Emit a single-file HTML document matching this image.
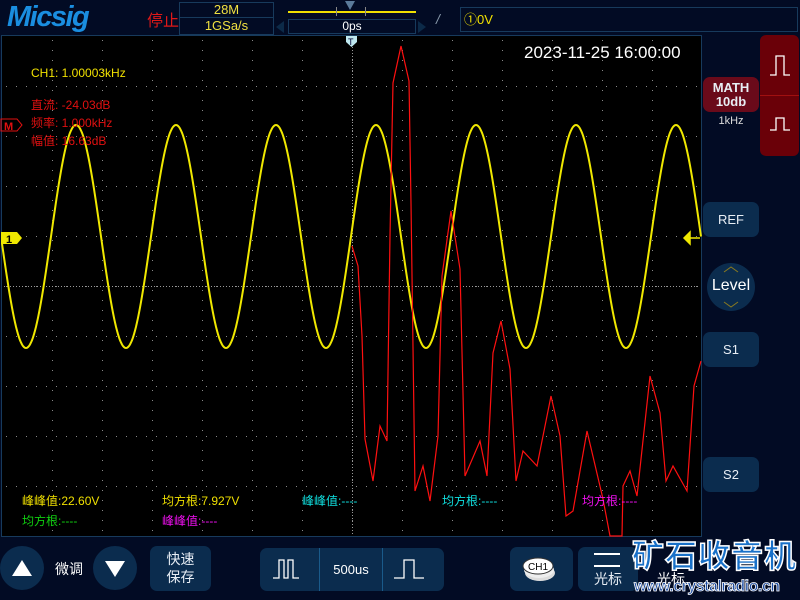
<!DOCTYPE html>
<html><head><meta charset="utf-8">
<style>
*{margin:0;padding:0;box-sizing:border-box}
body{width:800px;height:600px;background:#020b24;position:relative;overflow:hidden;font-family:"Liberation Sans","Noto Sans CJK SC",sans-serif;color:#fff}
.a{position:absolute;white-space:nowrap}
.btn{position:absolute;background:#0b2c4e;border-radius:7px;color:#e8eef5;text-align:center}
.circ{position:absolute;background:#0b2c4e;border-radius:50%;width:44px;height:44px}
</style></head><body>
<div class="a" style="left:7px;top:1px;font:italic bold 29px 'Liberation Sans',sans-serif;color:#1a8ee0;letter-spacing:-1.5px">Micsig</div>
<div class="a" style="left:147px;top:7px;font-size:16px;color:#e01818">停止</div>
<div class="a" style="left:179px;top:2px;width:95px;height:33px;border:1px solid #173a5c"></div>
<div class="a" style="left:179px;top:17px;width:95px;height:1px;background:#173a5c"></div>
<div class="a" style="left:179px;top:2px;width:95px;text-align:center;font-size:13px;color:#f0e040">28M</div>
<div class="a" style="left:179px;top:18px;width:95px;text-align:center;font-size:13px;color:#f0e040">1GSa/s</div>
<div class="a" style="left:288px;top:11px;width:128px;height:2px;background:#f0e000"></div>
<div class="a" style="left:336px;top:7px;width:30px;height:9px;border:1px solid #888;border-top:none;border-bottom:none"></div>
<div class="a" style="left:345px;top:1px;width:0;height:0;border-left:5px solid transparent;border-right:5px solid transparent;border-top:9px solid #5a7a9a"></div>
<div class="a" style="left:288px;top:19px;width:128px;height:15px;border:1px solid #173a5c;text-align:center;font-size:12px;line-height:13px;color:#fff">0ps</div>
<div class="a" style="left:276px;top:21px;width:0;height:0;border-top:6px solid transparent;border-bottom:6px solid transparent;border-right:8px solid #0c2a48"></div>
<div class="a" style="left:418px;top:21px;width:0;height:0;border-top:6px solid transparent;border-bottom:6px solid transparent;border-left:8px solid #0c2a48"></div>
<div class="a" style="left:436px;top:11px;font-size:14px;color:#8899aa;font-style:italic">/</div>
<div class="a" style="left:460px;top:7px;width:338px;height:25px;border:1px solid #173a5c;padding-left:3px;font-size:13px;line-height:23px;color:#f0e000">①0V</div>
<div class="a" style="left:1px;top:35px;width:701px;height:502px;background:#000;border:1px solid #173a5c"></div>
<svg class="a" style="left:0;top:0" width="800" height="600" id="sv">
<g id="grid"></g>
<polyline id="sine" fill="none" stroke="#f0e800" stroke-width="2"/>
<polyline fill="none" stroke="#ff1010" stroke-width="1.2" points="352,246 358,266 362,336 365,439 373,481 380,426 387,441 390,236 393,83 401,46 409,81 411,203 415,491 423,466 430,501 438,436 442,276 451,211 460,269 465,476 480,441 487,476 493,353 501,321 510,369 516,481 523,451 537,466 551,396 560,436 566,516 573,511 587,431 603,499 610,536 622,536 623,486 630,471 637,496 650,376 660,413 666,481 673,466 687,491 694,386 701,361"/>
<path d="M346 36h11v6l-5.5 5-5.5-5z" fill="#bfe8f0"/>
<text x="348" y="45" font-size="9" fill="#003">T</text>
<path d="M1 232h16l5 6-5 6H1z" fill="#f0e800"/>
<text x="6" y="243" font-size="11" font-weight="bold" fill="#000" font-family="Liberation Sans">1</text>
<path d="M1 119h16l5 6-5 6H1z" fill="none" stroke="#e01010"/>
<text x="4" y="130" font-size="11" font-weight="bold" fill="#e01010" font-family="Liberation Sans">M</text>
<path d="M684 238l6-6v12z M690 238h10" fill="#f0e800" stroke="#f0e800" stroke-width="1.5"/>
</svg>
<div class="a" style="left:31px;top:66px;font-size:12px;color:#f0e000">CH1: 1.00003kHz</div>
<div class="a" style="left:31px;top:96px;font-size:12px;color:#e01010;line-height:18px">直流: -24.03dB<br>频率: 1.000kHz<br>幅值: 16.63dB</div>
<div class="a" style="left:524px;top:43px;font-size:17px;color:#fff">2023-11-25 16:00:00</div>
<div class="a" style="left:22px;top:492px;font-size:12px;color:#f0e000">峰峰值:22.60V</div>
<div class="a" style="left:162px;top:492px;font-size:12px;color:#f0e000">均方根:7.927V</div>
<div class="a" style="left:302px;top:492px;font-size:12px;color:#10e0e0">峰峰值:----</div>
<div class="a" style="left:442px;top:492px;font-size:12px;color:#10e0e0">均方根:----</div>
<div class="a" style="left:582px;top:492px;font-size:12px;color:#f010f0">均方根:----</div>
<div class="a" style="left:22px;top:512px;font-size:12px;color:#10d010">均方根:----</div>
<div class="a" style="left:162px;top:512px;font-size:12px;color:#f010f0">峰峰值:----</div>
<div class="a" style="left:760px;top:35px;width:39px;height:121px;background:#6a0008;border-radius:6px"></div>
<div class="a" style="left:760px;top:95px;width:39px;height:1px;background:#a01010"></div>
<svg class="a" style="left:768px;top:50px" width="24" height="90"><path d="M2 25h6V6h8v19h6 M2 80h6V68h8v12h6" fill="none" stroke="#fff" stroke-width="1.3"/></svg>
<div class="btn" style="left:703px;top:77px;width:56px;height:35px;background:#6a0a1a;font-weight:bold;font-size:13px;line-height:14px;padding-top:4px">MATH<br>10db</div>
<div class="a" style="left:703px;top:115px;width:56px;text-align:center;font-size:11px;color:#ddd">1kHz</div>
<div class="btn" style="left:703px;top:202px;width:56px;height:35px;line-height:35px;font-size:13px">REF</div>
<div class="circ" style="left:707px;top:263px;width:48px;height:48px;background:#0b2c4e"></div>
<div class="a" style="left:707px;top:277px;width:48px;text-align:center;font-size:16px;color:#fff">Level</div>
<svg class="a" style="left:721px;top:264px" width="20" height="46"><path d="M3 8l7-5 7 5 M3 38l7 5 7-5" fill="none" stroke="#8a7a20"/></svg>
<div class="btn" style="left:703px;top:332px;width:56px;height:35px;line-height:35px;font-size:13px">S1</div>
<div class="btn" style="left:703px;top:457px;width:56px;height:35px;line-height:35px;font-size:13px">S2</div>
<div class="circ" style="left:0;top:546px"></div>
<div class="a" style="left:12px;top:560px;width:0;height:0;border-left:10px solid transparent;border-right:10px solid transparent;border-bottom:16px solid #fff"></div>
<div class="a" style="left:55px;top:559px;font-size:14px;color:#fff">微调</div>
<div class="circ" style="left:93px;top:546px"></div>
<div class="a" style="left:105px;top:561px;width:0;height:0;border-left:10px solid transparent;border-right:10px solid transparent;border-top:16px solid #fff"></div>
<div class="btn" style="left:150px;top:546px;width:61px;height:45px;font-size:14px;line-height:18px;padding-top:4px">快速<br>保存</div>
<div class="btn" style="left:260px;top:548px;width:184px;height:43px"></div>
<div class="a" style="left:319px;top:548px;width:1px;height:43px;background:#1a5a8a"></div>
<div class="a" style="left:382px;top:548px;width:1px;height:43px;background:#1a5a8a"></div>
<svg class="a" style="left:270px;top:556px" width="170" height="28"><path d="M3 22h6V4h5v18h4V4h5v18h6 M124 22h10V4h10v18h10" fill="none" stroke="#fff" stroke-width="1.3"/></svg>
<div class="a" style="left:320px;top:562px;width:62px;text-align:center;font-size:13px;color:#fff">500us</div>
<div class="btn" style="left:510px;top:547px;width:63px;height:44px"></div>
<svg class="a" style="left:520px;top:555px" width="44" height="30"><ellipse cx="20" cy="18" rx="15" ry="8" fill="#ddd"/><ellipse cx="19" cy="15" rx="15" ry="8" fill="#eee"/><ellipse cx="18" cy="11" rx="15" ry="8" fill="#fff" stroke="#333"/><text x="8" y="15" font-size="10" fill="#000" font-family="Liberation Sans">CH1</text></svg>
<div class="btn" style="left:578px;top:547px;width:60px;height:44px;font-size:14px;padding-top:22px">光标</div>
<div class="a" style="left:594px;top:553px;width:26px;height:2px;background:#fff"></div>
<div class="a" style="left:594px;top:565px;width:26px;height:2px;background:#fff"></div>
<div class="a" style="left:657px;top:569px;font-size:14px;color:#fff">光标</div>
<div class="a" style="left:632px;top:536px;font-size:32px;font-weight:bold;color:#1870c8;-webkit-text-stroke:1.5px #fff;line-height:40px;letter-spacing:1px">矿石收音机</div>
<div class="a" style="left:634px;top:578px;font-size:16px;font-weight:bold;color:#1a4aa0;-webkit-text-stroke:0.8px #fff;letter-spacing:-0.5px">www.crystalradio.cn</div>
<script>
var g=document.getElementById('grid'),s='';
for(var x=52;x<702;x+=50){for(var y=40;y<536;y+=10){s+='<rect x="'+x+'" y="'+y+'" width="1" height="1" fill="#888"/>';}}
for(var y=86;y<536;y+=50){for(var x=6;x<700;x+=10){s+='<rect x="'+x+'" y="'+y+'" width="1" height="1" fill="#888"/>';}}
for(var y=38;y<536;y+=3)s+='<rect x="352" y="'+y+'" width="1" height="1" fill="#999"/>';
for(var x=4;x<700;x+=3)s+='<rect x="'+x+'" y="286" width="1" height="1" fill="#999"/>';
g.innerHTML=s;
var p='';for(var x=2;x<=701;x++){var y=236.5-111.5*Math.cos(2*Math.PI*(x-76)/100);p+=x+','+y.toFixed(1)+' ';}
document.getElementById('sine').setAttribute('points',p);
</script>
</body></html>
